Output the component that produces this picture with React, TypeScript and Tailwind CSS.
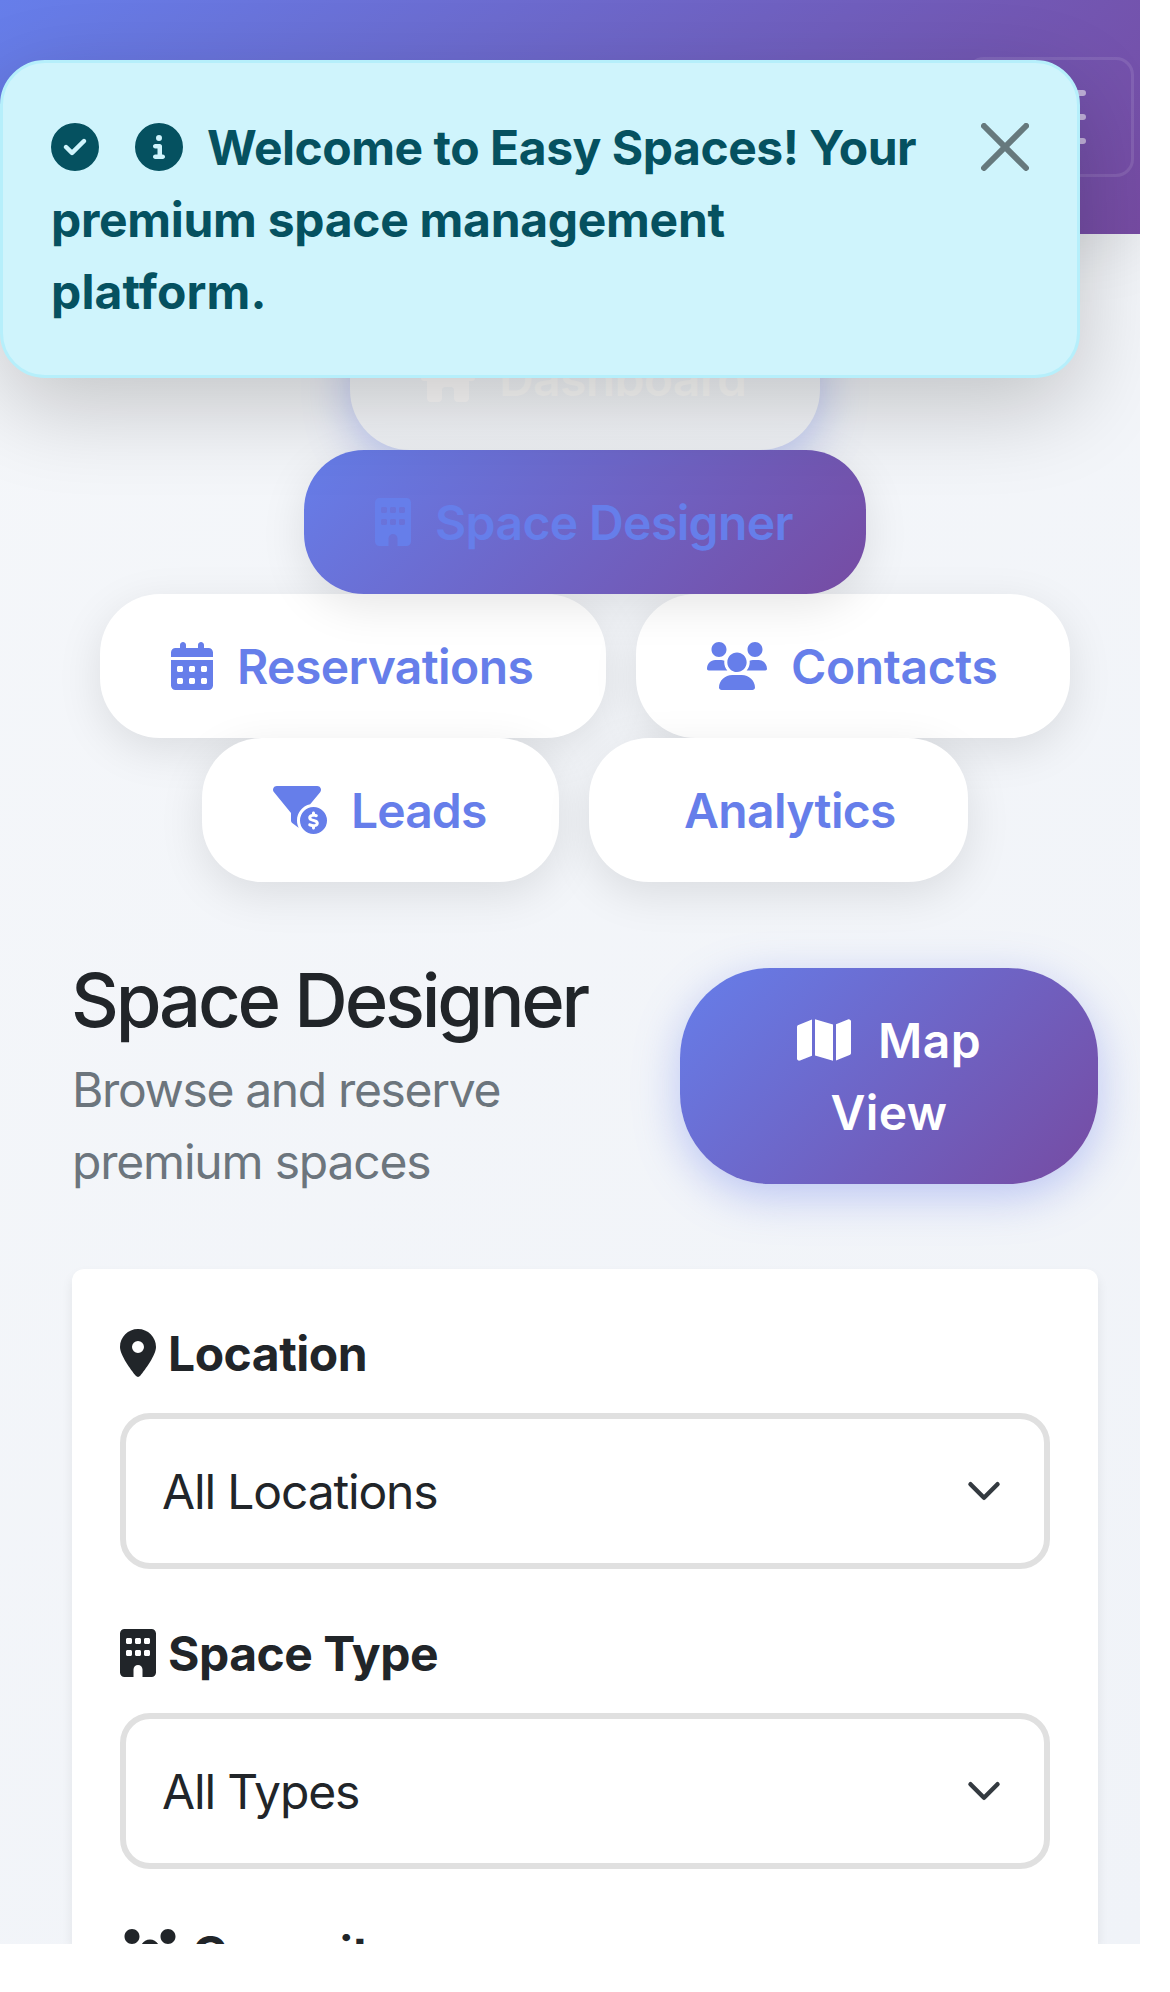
import type { ReactNode } from "react";
import {
  FaBuilding,
  FaCalendarDays,
  FaCircleCheck,
  FaCircleInfo,
  FaFilterCircleDollar,
  FaHouse,
  FaLocationDot,
  FaMap,
} from "react-icons/fa6";

function UsersIcon({ className = "" }: { className?: string }) {
  return (
    <svg viewBox="0 0 640 512" fill="currentColor" className={className}>
      <path d="M319.9 320c57.41 0 103.1-46.56 103.1-104c0-57.44-46.54-104-103.1-104c-57.41 0-103.1 46.56-103.1 104C215.9 273.4 262.5 320 319.9 320zM369.9 352H270.1C191.6 352 128 411.7 128 485.3C128 500.1 140.7 512 156.4 512h327.2C499.3 512 512 500.1 512 485.3C512 411.7 448.4 352 369.9 352zM512 160c44.18 0 80-35.82 80-80S556.2 0 512 0c-44.18 0-80 35.82-80 80S467.8 160 512 160zM183.9 216c0-5.449 .9824-10.63 1.609-15.91C174.6 194.1 162.6 192 149.9 192H88.08C39.44 192 0 233.8 0 285.3C0 295.6 7.887 304 17.62 304h199.5C196.7 280.2 183.9 249.7 183.9 216zM128 160c44.18 0 80-35.82 80-80S172.2 0 128 0C83.82 0 48 35.82 48 80S83.82 160 128 160zM551.9 192h-61.84c-12.8 0-24.88 3.037-35.86 8.24C454.8 205.5 455.8 210.6 455.8 216c0 33.71-12.78 64.21-33.16 88h199.7C632.1 304 640 295.6 640 285.3C640 233.8 600.6 192 551.9 192z" />
    </svg>
  );
}

function Pill({ icon, label, className }: { icon: ReactNode; label: string; className: string }) {
  return (
    <a className={`flex h-[144px] shrink-0 items-center gap-6 rounded-[60px] pl-[71px] font-semibold ${className}`}>
      {icon}
      <span className="translate-y-px whitespace-nowrap">{label}</span>
    </a>
  );
}

const plain = "bg-white text-[#667eea] shadow-[0_12px_45px_rgba(0,0,0,0.1)]";

function FieldLabel({ icon, label }: { icon: ReactNode; label: string }) {
  return (
    <div className="mb-6 flex h-[72px] items-center gap-3 font-bold">
      {icon}
      <span className="translate-y-px tracking-[-0.5px]">{label}</span>
    </div>
  );
}

function Field({ icon, label, value }: { icon: ReactNode; label: string; value: string }) {
  return (
    <div className="mb-12">
      <FieldLabel icon={icon} label={label} />
      <div className="flex h-[156px] items-center justify-between rounded-[30px] border-[6px] border-[#e0e0e0] bg-white pr-[42px] pl-9">
        <span className="translate-y-px tracking-[-1.15px]">{value}</span>
        <svg viewBox="0 0 16 16" className="h-9 w-9" fill="none" stroke="#343a40" strokeWidth="2" strokeLinecap="round" strokeLinejoin="round">
          <path d="m2 5 6 6 6-6" />
        </svg>
      </div>
    </div>
  );
}

export default function App() {
  return (
    <div className="h-[1992px] w-[1170px] overflow-hidden bg-white font-['Inter',sans-serif] text-[48px] leading-[72px] text-[#212529]">
      <div className="relative flex h-[1944px] w-[1140px] flex-col overflow-hidden bg-[linear-gradient(135deg,#f5f7fa_0%,#f0f3f8_100%)]">
        <header className="flex h-[234px] shrink-0 items-center justify-end bg-[linear-gradient(135deg,#667eea_0%,#764ba2_100%)] pr-1.5 shadow-[0_12px_60px_rgba(0,0,0,0.1)]">
          <button className="flex h-[120px] w-[168px] items-center justify-center rounded-[18px] border-[3px] border-white/10">
            <svg viewBox="0 0 30 30" className="h-[90px] w-[90px]" stroke="rgba(255,255,255,0.55)" strokeWidth="2" strokeLinecap="round">
              <path d="M4 7h22M4 15h22M4 23h22" />
            </svg>
          </button>
        </header>

        <nav className="mt-[72px] flex shrink-0 flex-col items-center pl-[30px]">
          <Pill
            icon={<FaHouse className="h-12 w-[54px]" />}
            label="Dashboard"
            className="w-[470px] tracking-[-0.65px] text-[#fffefc]/80 shadow-[0_12px_45px_rgba(102,126,234,0.4)]"
          />
          <Pill
            icon={<FaBuilding className="h-12 w-9" />}
            label="Space Designer"
            className="relative z-10 w-[562px] bg-[linear-gradient(135deg,#667eea_0%,#764ba2_100%)] tracking-[-0.6px] text-[#667eea] shadow-[0_12px_45px_rgba(0,0,0,0.1)]"
          />
          <div className="flex gap-[30px]">
            <Pill icon={<FaCalendarDays className="h-12 w-[42px]" />} label="Reservations" className={`w-[506px] tracking-[-0.6px] ${plain}`} />
            <Pill icon={<UsersIcon className="h-12 w-[60px]" />} label="Contacts" className={`w-[434px] tracking-[-0.4px] ${plain}`} />
          </div>
          <div className="flex gap-[30px]">
            <Pill icon={<FaFilterCircleDollar className="h-12 w-[54px]" />} label="Leads" className={`w-[357px] tracking-[-0.9px] ${plain}`} />
            <Pill icon={<i />} label="Analytics" className={`w-[379px] tracking-[-0.65px] ${plain}`} />
          </div>
        </nav>

        <main className="mt-[73px] flex min-h-0 grow flex-col pr-[42px] pl-[72px]">
          <div className="flex shrink-0 items-center justify-between">
            <div>
              <h2 className="mb-[9px] -ml-px translate-y-px pl-0 text-[74.13px] leading-[89px] font-medium tracking-[-3.2px] whitespace-nowrap">
                Space Designer
              </h2>
              <p className="w-[480px] translate-y-px tracking-[-1.35px] text-[#6c757d]">
                Browse and reserve <span className="tracking-[-1.2px]">premium spaces</span>
              </p>
            </div>
            <button className="h-[216px] w-[418px] rounded-[90px] bg-[linear-gradient(135deg,#667eea_0%,#764ba2_100%)] text-center font-semibold tracking-[0.4px] text-white shadow-[0_12px_45px_rgba(102,126,234,0.4)]">
              <span className="flex items-center justify-center gap-[27px]">
                <FaMap className="h-12 w-[54px]" />
                <span className="translate-y-px">Map</span>
              </span>
              <span className="block translate-y-px">View</span>
            </button>
          </div>

          <section className="mt-[72px] min-h-0 grow rounded-t-[12px] bg-white px-12 pt-12 shadow-[0_6px_12px_rgba(0,0,0,0.075)]">
            <Field icon={<FaLocationDot className="h-12 w-9" />} label="Location" value="All Locations" />
            <Field icon={<FaBuilding className="h-12 w-9" />} label="Space Type" value="All Types" />
            <FieldLabel icon={<UsersIcon className="h-12 w-[60px]" />} label="Capacity" />
          </section>
        </main>

        <div className="absolute top-[60px] left-0 z-20 flex h-[318px] w-[1080px] items-start justify-between rounded-[45px] border-[3px] border-[#b6effb] bg-[#cff4fc] p-12 font-bold text-[#055160] shadow-[0_30px_90px_rgba(0,0,0,0.2)]">
          <div>
            <div className="flex h-[72px] items-center">
              <FaCircleCheck className="mr-9 h-12 w-12" />
              <FaCircleInfo className="mr-6 h-12 w-12" />
              <span className="translate-y-px tracking-[-0.48px] whitespace-nowrap">Welcome to Easy Spaces! Your</span>
            </div>
            <p className="translate-y-px tracking-[-0.3px]">premium space management</p>
            <p className="translate-y-px tracking-[0.15px]">platform.</p>
          </div>
          <svg viewBox="0 0 16 16" className="mt-3 h-12 w-12 opacity-50">
            <path d="M.293.293a1 1 0 0 1 1.414 0L8 6.586 14.293.293a1 1 0 1 1 1.414 1.414L9.414 8l6.293 6.293a1 1 0 0 1-1.414 1.414L8 9.414l-6.293 6.293a1 1 0 0 1-1.414-1.414L6.586 8 .293 1.707a1 1 0 0 1 0-1.414z" />
          </svg>
        </div>
      </div>
    </div>
  );
}
